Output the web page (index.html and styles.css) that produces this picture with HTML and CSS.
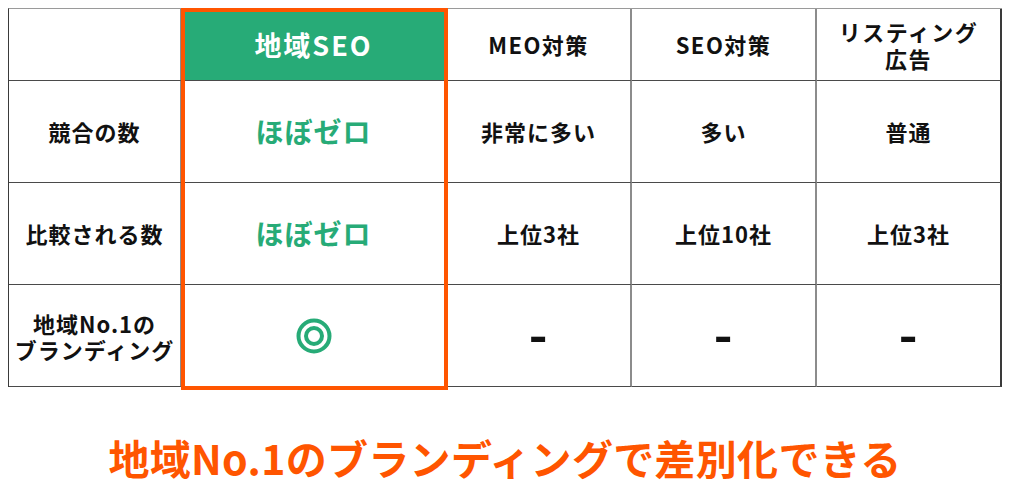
FILE: index.html
```html
<!DOCTYPE html>
<html lang="ja">
<head>
<meta charset="utf-8">
<title>地域SEO比較</title>
<link rel="stylesheet" href="styles.css">
</head>
<body>
<main class="page">
  <div class="compare">
    <div class="cell head"></div>
    <div class="cell head head-main">地域SEO</div>
    <div class="cell head">MEO対策</div>
    <div class="cell head">SEO対策</div>
    <div class="cell head">リスティング<br>広告</div>

    <div class="cell label">競合の数</div>
    <div class="cell main-val">ほぼゼロ</div>
    <div class="cell">非常に多い</div>
    <div class="cell">多い</div>
    <div class="cell">普通</div>

    <div class="cell label">比較される数</div>
    <div class="cell main-val">ほぼゼロ</div>
    <div class="cell">上位3社</div>
    <div class="cell">上位10社</div>
    <div class="cell">上位3社</div>

    <div class="cell label label-2">地域No.1の<br>ブランディング</div>
    <div class="cell main-val">
      <svg class="double-circle" width="36" height="36" viewBox="0 0 36 36" aria-label="◎">
        <circle cx="18" cy="18" r="15.5" fill="none" stroke="#27ab77" stroke-width="4"/>
        <circle cx="18" cy="18" r="8" fill="none" stroke="#27ab77" stroke-width="4"/>
      </svg>
    </div>
    <div class="cell dash-cell"><span class="dash">-</span></div>
    <div class="cell dash-cell"><span class="dash">-</span></div>
    <div class="cell dash-cell"><span class="dash">-</span></div>

    <div class="highlight"></div>
  </div>
  <p class="caption">地域No.1のブランディングで差別化できる</p>
</main>
</body>
</html>
```

FILE: styles.css
```css
* { box-sizing: border-box; }

html, body {
  margin: 0;
  padding: 0;
  background: #ffffff;
}

body {
  width: 1010px;
  height: 494px;
  overflow: hidden;
  font-family: "Noto Sans CJK JP", "Noto Sans", sans-serif;
  color: #111111;
}

.page {
  display: flex;
  flex-direction: column;
  align-items: flex-start;
  padding: 8px 0 0 8px;
}

.compare {
  position: relative;
  display: grid;
  grid-template-columns: 173px 265px 185px 185px 185px;
  grid-template-rows: 72px 102px 102px 102px;
  border-left: 1px solid #3a3a3a;
  border-top: 1px solid #9a9a9a;
}

.cell {
  display: flex;
  align-items: center;
  justify-content: center;
  text-align: center;
  border-right: 2px solid #8c8c8c;
  border-bottom: 1px solid #4a4a4a;
  font-size: 22px;
  font-weight: 700;
  line-height: 27px;
  letter-spacing: 1px;
}

.cell:nth-child(5n) {
  border-right: 2px solid #3a3a3a;
}

.head {
  letter-spacing: 1.5px;
}

.head-main {
  background: #27ab77;
  color: #ffffff;
  font-size: 27px;
  letter-spacing: 2px;
}

.label-2 {
  line-height: 26px;
}

.main-val {
  color: #27ab77;
  font-size: 28px;
  letter-spacing: 1px;
}

.double-circle {
  display: block;
}

.dash {
  font-family: "Liberation Sans", sans-serif;
  font-size: 44px;
  line-height: 1;
  font-weight: 700;
  transform: scaleX(1.25);
  display: inline-block;
}

.highlight {
  position: absolute;
  left: 172px;
  top: -1px;
  width: 267px;
  height: 382px;
  border: 4px solid #ff5500;
  pointer-events: none;
}

.caption {
  align-self: stretch;
  margin: 46px 8px 0 0;
  text-align: center;
  color: #ff5500;
  font-size: 41px;
  font-weight: 700;
  line-height: 48px;
  letter-spacing: 0.3px;
}
```
